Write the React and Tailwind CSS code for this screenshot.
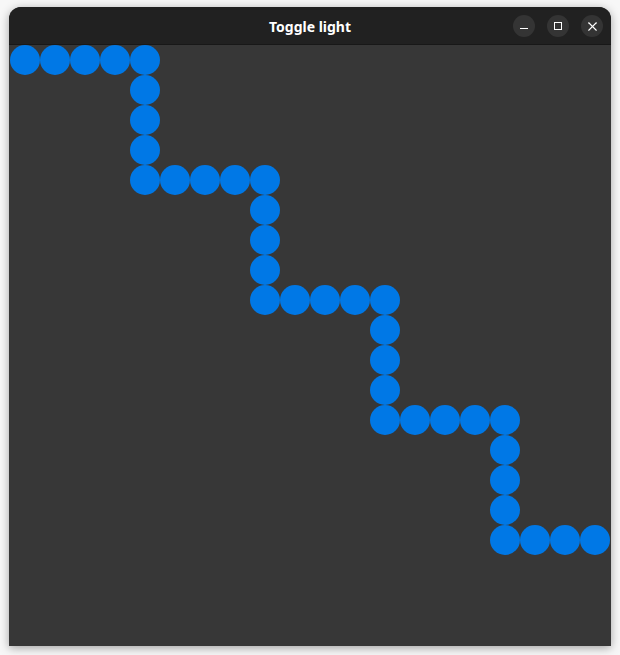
import { X } from "lucide-react";

const buildPath = () => {
  const cells = new Set();
  let r = 0;
  let c = 0;
  cells.add(`${r},${c}`);
  // right 4, down 4, repeated along the staircase
  for (let step = 0; step < 4; step++) {
    for (let i = 0; i < 4; i++) cells.add(`${r},${++c}`);
    for (let i = 0; i < 4; i++) cells.add(`${++r},${c}`);
  }
  for (let i = 0; i < 3; i++) cells.add(`${r},${++c}`);
  return cells;
};

const path = buildPath();

const WindowButton = ({ children }) => (
  <div className="w-[22px] h-[22px] rounded-full bg-[#343434] flex items-center justify-center text-white">
    {children}
  </div>
);

export default function App() {
  const cells = [];
  for (let r = 0; r < 20; r++) {
    for (let c = 0; c < 20; c++) {
      cells.push(
        <div key={`${r}-${c}`} className="w-[30px] h-[30px]">
          {path.has(`${r},${c}`) && (
            <div className="w-full h-full rounded-full bg-[#0078e6]" />
          )}
        </div>
      );
    }
  }

  return (
    <div className="w-[620px] h-[655px] bg-[#f7f7f7] pt-[7px] pl-[9px]">
      <div className="w-[602px] h-[639px] rounded-t-[12px] overflow-hidden bg-[#373737] shadow-[0_2px_10px_rgba(0,0,0,0.35)] flex flex-col">
        {/* title bar */}
        <div className="relative h-[38px] bg-[#212121] border-b border-[#181818] flex items-center justify-center pt-[1px]">
          <span
            className="text-white text-[14px] font-bold"
            style={{ fontFamily: '"Noto Sans", "Open Sans", sans-serif' }}
          >
            Toggle light
          </span>
          <div className="absolute right-[8px] top-[8px] flex gap-[12px]">
            <WindowButton>
              <div className="w-[8px] h-[1.5px] bg-white mt-[5px]" />
            </WindowButton>
            <WindowButton>
              <div className="w-[8px] h-[8px] border-[1.5px] border-white" />
            </WindowButton>
            <WindowButton>
              <X size={15} strokeWidth={1.8} />
            </WindowButton>
          </div>
        </div>
        {/* canvas */}
        <div className="px-[1px]">
          <div className="grid grid-cols-[repeat(20,30px)] grid-rows-[repeat(20,30px)]">
            {cells}
          </div>
        </div>
      </div>
    </div>
  );
}
